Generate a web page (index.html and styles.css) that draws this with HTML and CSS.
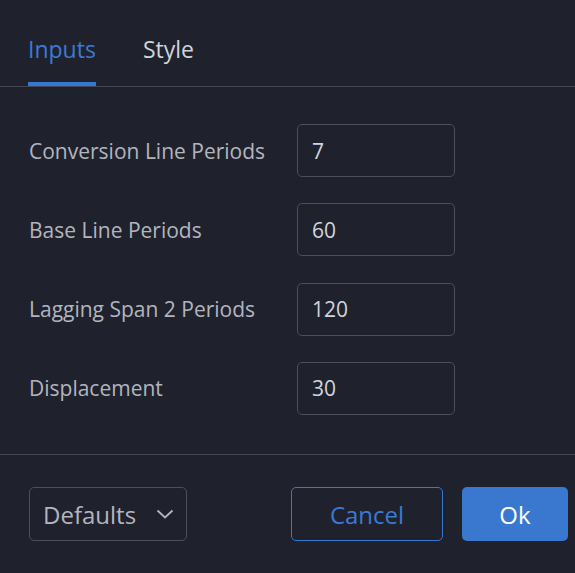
FILE: index.html
```html
<!DOCTYPE html>
<html lang="en">

<head>
    <meta charset="UTF-8">
    <meta name="viewport" content="width=device-width, initial-scale=1.0">
    <title>Ichimoku settings</title>
    <link rel="stylesheet" href="styles.css">
</head>

<body>
    <div class="dialog">
        <div class="tabs">
            <div class="tab active">Inputs</div>
            <div class="tab">Style</div>
        </div>

        <div class="content">
            <div class="row">
                <label for="conv">Conversion Line Periods</label>
                <input type="text" id="conv" value="7">
            </div>
            <div class="row">
                <label for="base">Base Line Periods</label>
                <input type="text" id="base" value="60">
            </div>
            <div class="row">
                <label for="lag">Lagging Span 2 Periods</label>
                <input type="text" id="lag" value="120">
            </div>
            <div class="row">
                <label for="disp">Displacement</label>
                <input type="text" id="disp" value="30">
            </div>
        </div>

        <div class="footer">
            <button type="button" class="defaults">Defaults
                <svg width="18" height="10" viewBox="0 0 18 10"><path d="M1.5 1.5l7.5 7 7.5-7" fill="none" stroke="#b2b5be" stroke-width="1.8"/></svg>
            </button>
            <div class="actions">
                <button type="button" class="cancel">Cancel</button>
                <button type="button" class="ok">Ok</button>
            </div>
        </div>
    </div>
</body>

</html>
```

FILE: styles.css
```css
html, body {
    margin: 0;
    background-color: #1f222d;
}

.dialog {
    width: 575px;
    height: 573px;
    font-family: "Open Sans", "Noto Sans", sans-serif;
    color: #b2b5be;
}

.tabs {
    display: flex;
    gap: 47px;
    padding: 0 0 0 28px;
    height: 86px;
    border-bottom: 1px solid #434651;
}

.tab {
    font-size: 23px;
    padding-top: 34px;
    color: #d1d4dc;
    box-sizing: border-box;
    border-bottom: 4px solid transparent;
    line-height: 30px;
}

.tab.active {
    color: #3b7ad3;
    border-bottom-color: #3677d2;
}

.content {
    padding: 37px 0 0 29px;
    height: 368px;
    border-bottom: 1px solid #434651;
    box-sizing: border-box;
}

.row {
    display: flex;
    align-items: center;
    height: 53px;
    margin-bottom: 26.3px;
}

.row label {
    width: 268px;
    font-size: 21px;
}

.row input {
    width: 158px;
    height: 53px;
    box-sizing: border-box;
    background: transparent;
    border: 1px solid #4c4f5a;
    border-radius: 5px;
    color: #d1d4dc;
    font-family: inherit;
    font-size: 21px;
    padding: 0 14px;
    outline: none;
}

.footer {
    display: flex;
    justify-content: space-between;
    padding: 32px 7px 0 29px;
}

button {
    font-family: inherit;
    font-size: 24px;
    height: 54px;
    border-radius: 5px;
    box-sizing: border-box;
}

.defaults {
    width: 158px;
    background: transparent;
    border: 1px solid #4c4f5a;
    color: #b2b5be;
    display: flex;
    align-items: center;
    justify-content: space-between;
    padding: 0 12px 0 13px;
}

.actions {
    display: flex;
    gap: 19px;
}

.cancel {
    width: 152px;
    background: transparent;
    border: 1px solid #3677d2;
    color: #3b7ad3;
}

.ok {
    width: 106px;
    background-color: #3a78d0;
    border: none;
    color: #ffffff;
}
```
